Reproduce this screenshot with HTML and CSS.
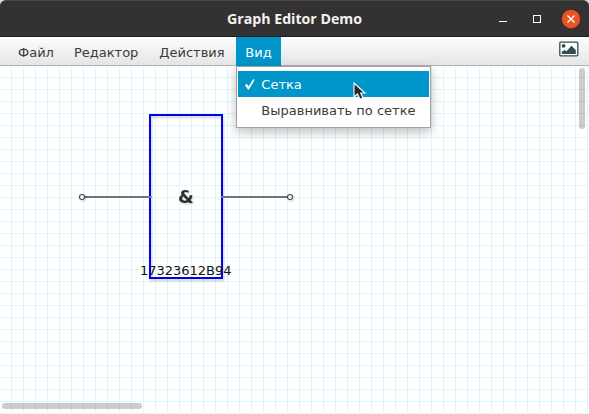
FILE: index.html
```html
<!DOCTYPE html>
<html lang="ru">
<head>
<meta charset="utf-8">
<title>Graph Editor Demo</title>
<link rel="stylesheet" href="styles.css">
</head>
<body>
<div class="window">
  <header class="titlebar">
    <svg class="title" width="137" height="24"><text x="1" y="17" textLength="135" lengthAdjust="spacingAndGlyphs">Graph Editor Demo</text></svg>
    <div class="controls">
      <svg width="87" height="20" viewBox="0 0 87 20">
        <path d="M5 12.5h8" stroke="#fff"/>
        <rect x="39.5" y="6.5" width="7" height="7" fill="none" stroke="#fff"/>
        <circle cx="77" cy="10" r="9.2" fill="#e95420"/>
        <path d="M73.5 6.5l7 7m0-7l-7 7" stroke="#fff" stroke-width="1.4"/>
      </svg>
    </div>
  </header>
  <nav class="menubar">
    <div class="menu">Файл</div>
    <div class="menu">Редактор</div>
    <div class="menu actions">Действия</div>
    <div class="menu open">Вид
      <div class="popup">
        <div class="item selected">
          <svg class="check" width="10" height="11" viewBox="0 0 10 11"><path d="M0 6.2L1.8 4.8 3.5 7.5 8.2 0.3 9.7 0.8 4 10.5H3z" fill="#fff"/></svg>
          <span>Сетка</span>
        </div>
        <div class="item"><span>Выравнивать по сетке</span></div>
      </div>
    </div>
    <svg class="image-icon" width="20" height="16" viewBox="0 0 20 16">
      <rect x="0.8" y="1.2" width="18" height="13.6" rx="1" fill="#fff" stroke="#2f4f4f" stroke-width="1.3"/>
      <circle cx="4.6" cy="4.8" r="1.9" fill="#2f4f4f"/>
      <path d="M2.8 13v-2.2l2.7-1.8 2 1.3L12.5 4.8l4.3 4.2V13z" fill="#2f4f4f"/>
    </svg>
  </nav>
  <main class="canvas">
    <svg class="graph" width="589" height="348" viewBox="0 66 589 348">
      <rect class="node" x="150" y="115" width="72" height="163"/>
      <g class="wires">
        <path d="M82 197H151.5M221 197H290"/>
      </g>
      <g class="ports">
        <circle cx="82" cy="197" r="2.5"/>
        <circle cx="290" cy="197" r="2.5"/>
      </g>
      <text class="symbol" x="178" y="203">&amp;</text>
      <text class="caption" x="140" y="275" textLength="91.5">17323612B94</text>
    </svg>
    <div class="scroll vertical"></div>
    <div class="scroll horizontal"></div>
  </main>
  <svg class="cursor" width="14" height="20" viewBox="0 0 14 20"><path d="M1 1V15L4.5 12 7 17.3 10 16 7.7 11H12z" fill="#282828" stroke="#fff" stroke-width="1.1"/></svg>
</div>
</body>
</html>
```
FILE: styles.css
```css
body {
  margin: 0;
  background: #d8dadb;
  font: 13px/16px "DejaVu Sans", sans-serif;
  color: #3b3b3b;
}
.window {
  position: relative;
  display: flex;
  flex-direction: column;
  width: 589px;
  height: 414px;
  overflow: hidden;
}
.titlebar {
  box-sizing: border-box;
  height: 37px;
  display: grid;
  grid-template-columns: 226px 137px 1fr;
  align-items: center;
  background: #333132;
  border-top: 1px solid #484647;
  border-bottom: 1px solid #1c1c1c;
  border-radius: 6px 6px 0 0;
}
.title {
  grid-column: 2;
}
.title text {
  font: bold 13.5px "Open Sans", sans-serif;
  fill: #f4f2ee;
}
.controls {
  grid-column: 3;
  display: flex;
  justify-content: flex-end;
  padding-right: 8px;
}
.controls svg,
.title,
.graph,
.cursor { display: block; }
.menubar {
  box-sizing: border-box;
  height: 29px;
  display: flex;
  padding: 0 10px 0 8px;
  background: linear-gradient(#fdfdfd, #e5e5e5);
  border-bottom: 1px solid #b3b3b3;
}
.menu {
  position: relative;
  box-sizing: border-box;
  height: 28px;
  padding: 8px 10px 0;
  white-space: nowrap;
}
.menu.actions {
  width: 87px;
  padding: 8px 0 0 11px;
  margin-right: auto;
}
.menu.actions {
  margin-right: 0;
}
.menu.open {
  width: 45px;
  height: 29px;
  margin-left: 1px;
  padding-left: 9px;
  background: #0096c9;
  color: #fff;
}
.popup {
  position: absolute;
  z-index: 2;
  left: 0;
  top: 29px;
  box-sizing: border-box;
  width: 195px;
  height: 62px;
  padding: 4px 1px;
  background: #fff;
  border: 1px solid #a2a2a2;
  box-shadow: 0 4px 10px rgba(0, 0, 0, .26);
  color: #3b3b3b;
}
.item {
  position: relative;
  box-sizing: border-box;
  height: 26px;
  padding: 6px 0 4px 23px;
}
.item.selected {
  background: #0096c9;
  color: #fff;
}
.check {
  position: absolute;
  left: 7px;
  top: 8px;
}
.image-icon {
  margin: 4px 0 0 auto;
}
.canvas {
  position: relative;
  box-sizing: border-box;
  height: 348px;
  background:
    linear-gradient(#f4f4f4, #f4f4f4) 0 347px / 100% 1px no-repeat,
    linear-gradient(90deg, #def6fc 1px, transparent 1px) 11px 0 / 12px 12px,
    linear-gradient(#def6fc 1px, transparent 1px) 0 11px / 12px 12px,
    #fff;
}
.wires path {
  fill: none;
  stroke: #6c7777;
  stroke-width: 2;
}
.node {
  fill: none;
  stroke: #0000f0;
  stroke-width: 2;
  filter: drop-shadow(1px 2px 1px rgba(0, 0, 0, .2));
}
.ports circle {
  fill: #fff;
  stroke: #2f4f4f;
  stroke-width: 1.1;
}
.ports {
  filter: drop-shadow(1px 1px 1px rgba(0, 0, 0, .2));
}
.symbol {
  font: bold 18px "DejaVu Sans", sans-serif;
  fill: #2d2d2d;
  filter: drop-shadow(1px 1px 1px rgba(0, 0, 0, .2));
}
.caption {
  font: 13px "DejaVu Sans", sans-serif;
  fill: #111;
}
.scroll {
  position: absolute;
  border-radius: 3px;
  background: rgba(0, 0, 0, .2);
}
.vertical {
  left: 579px;
  top: 2px;
  width: 6px;
  height: 61px;
}
.horizontal {
  left: 2px;
  top: 337px;
  width: 140px;
  height: 6px;
}
.cursor {
  position: absolute;
  z-index: 3;
  left: 353px;
  top: 82px;
}
```
